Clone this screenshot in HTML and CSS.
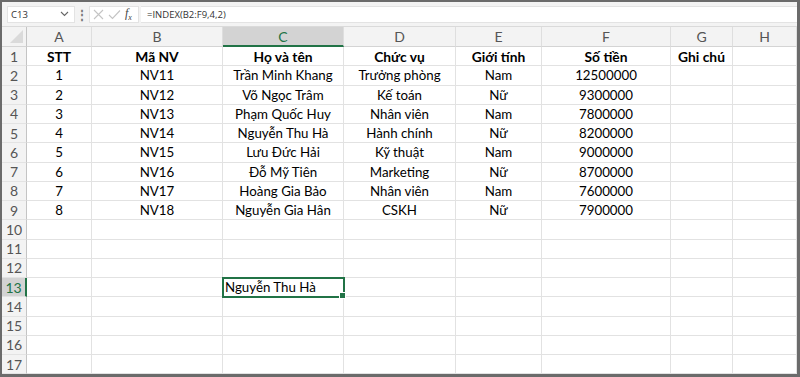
FILE: index.html
```html
<!DOCTYPE html>
<html lang="vi">
<head>
    <meta charset="UTF-8">
    <meta name="viewport" content="width=device-width, initial-scale=1.0">
    <title>Bảng nhân viên</title>
    <link rel="stylesheet" href="styles.css">
</head>
<body>
    <div class="window">
        <!-- Thanh công thức -->
        <div class="formula-bar">
            <div class="name-box">
                <span>C13</span>
                <svg class="chevron" width="9" height="6" viewBox="0 0 9 6"><path d="M1 1 L4.5 4.5 L8 1" fill="none" stroke="#666" stroke-width="1.1"/></svg>
            </div>
            <div class="dots">⋮</div>
            <div class="fx-box">
                <svg width="11" height="11" viewBox="0 0 11 11"><path d="M1 1 L10 10 M10 1 L1 10" stroke="#c4c4c4" stroke-width="1.1"/></svg>
                <svg width="13" height="11" viewBox="0 0 13 11"><path d="M1 6 L4.5 9.5 L12 1.5" fill="none" stroke="#c4c4c4" stroke-width="1.1"/></svg>
                <span class="fx">f<sub>x</sub></span>
            </div>
            <div class="formula-input">=INDEX(B2:F9,4,2)</div>
        </div>

        <!-- Bảng tính -->
        <div class="sheet">
            <div class="corner"><span class="corner-tri"></span></div>
            <div class="col-head">A</div>
            <div class="col-head">B</div>
            <div class="col-head active">C</div>
            <div class="col-head">D</div>
            <div class="col-head">E</div>
            <div class="col-head">F</div>
            <div class="col-head">G</div>
            <div class="col-head">H</div>

            <div class="row-head">1</div>
            <div class="cell bold">STT</div>
            <div class="cell bold">Mã NV</div>
            <div class="cell bold">Họ và tên</div>
            <div class="cell bold">Chức vụ</div>
            <div class="cell bold">Giới tính</div>
            <div class="cell bold">Số tiền</div>
            <div class="cell bold">Ghi chú</div>
            <div class="cell"></div>

            <div class="row-head">2</div>
            <div class="cell">1</div><div class="cell">NV11</div><div class="cell">Trần Minh Khang</div><div class="cell">Trưởng phòng</div><div class="cell">Nam</div><div class="cell">12500000</div><div class="cell"></div><div class="cell"></div>

            <div class="row-head">3</div>
            <div class="cell">2</div><div class="cell">NV12</div><div class="cell">Võ Ngọc Trâm</div><div class="cell">Kế toán</div><div class="cell">Nữ</div><div class="cell">9300000</div><div class="cell"></div><div class="cell"></div>

            <div class="row-head">4</div>
            <div class="cell">3</div><div class="cell">NV13</div><div class="cell">Phạm Quốc Huy</div><div class="cell">Nhân viên</div><div class="cell">Nam</div><div class="cell">7800000</div><div class="cell"></div><div class="cell"></div>

            <div class="row-head">5</div>
            <div class="cell">4</div><div class="cell">NV14</div><div class="cell">Nguyễn Thu Hà</div><div class="cell">Hành chính</div><div class="cell">Nữ</div><div class="cell">8200000</div><div class="cell"></div><div class="cell"></div>

            <div class="row-head">6</div>
            <div class="cell">5</div><div class="cell">NV15</div><div class="cell">Lưu Đức Hải</div><div class="cell">Kỹ thuật</div><div class="cell">Nam</div><div class="cell">9000000</div><div class="cell"></div><div class="cell"></div>

            <div class="row-head">7</div>
            <div class="cell">6</div><div class="cell">NV16</div><div class="cell">Đỗ Mỹ Tiên</div><div class="cell">Marketing</div><div class="cell">Nữ</div><div class="cell">8700000</div><div class="cell"></div><div class="cell"></div>

            <div class="row-head">8</div>
            <div class="cell">7</div><div class="cell">NV17</div><div class="cell">Hoàng Gia Bảo</div><div class="cell">Nhân viên</div><div class="cell">Nam</div><div class="cell">7600000</div><div class="cell"></div><div class="cell"></div>

            <div class="row-head">9</div>
            <div class="cell">8</div><div class="cell">NV18</div><div class="cell">Nguyễn Gia Hân</div><div class="cell">CSKH</div><div class="cell">Nữ</div><div class="cell">7900000</div><div class="cell"></div><div class="cell"></div>

            <div class="row-head">10</div>
            <div class="cell"></div><div class="cell"></div><div class="cell"></div><div class="cell"></div><div class="cell"></div><div class="cell"></div><div class="cell"></div><div class="cell"></div>

            <div class="row-head">11</div>
            <div class="cell"></div><div class="cell"></div><div class="cell"></div><div class="cell"></div><div class="cell"></div><div class="cell"></div><div class="cell"></div><div class="cell"></div>

            <div class="row-head">12</div>
            <div class="cell"></div><div class="cell"></div><div class="cell"></div><div class="cell"></div><div class="cell"></div><div class="cell"></div><div class="cell"></div><div class="cell"></div>

            <div class="row-head active">13</div>
            <div class="cell"></div><div class="cell"></div><div class="cell left selected">Nguyễn Thu Hà</div><div class="cell"></div><div class="cell"></div><div class="cell"></div><div class="cell"></div><div class="cell"></div>

            <div class="row-head">14</div>
            <div class="cell"></div><div class="cell"></div><div class="cell"></div><div class="cell"></div><div class="cell"></div><div class="cell"></div><div class="cell"></div><div class="cell"></div>

            <div class="row-head">15</div>
            <div class="cell"></div><div class="cell"></div><div class="cell"></div><div class="cell"></div><div class="cell"></div><div class="cell"></div><div class="cell"></div><div class="cell"></div>

            <div class="row-head">16</div>
            <div class="cell"></div><div class="cell"></div><div class="cell"></div><div class="cell"></div><div class="cell"></div><div class="cell"></div><div class="cell"></div><div class="cell"></div>

            <div class="row-head">17</div>
            <div class="cell"></div><div class="cell"></div><div class="cell"></div><div class="cell"></div><div class="cell"></div><div class="cell"></div><div class="cell"></div><div class="cell"></div>
        </div>
    </div>
</body>
</html>
```

FILE: styles.css
```css
* {
    margin: 0;
    padding: 0;
    box-sizing: border-box;
}

body {
    width: 800px;
    height: 377px;
    overflow: hidden;
    background: #ffffff;
    font-family: Lato, 'Open Sans', sans-serif;
}

.window {
    width: 800px;
    height: 377px;
    border-style: solid;
    border-color: #6b6b6b;
    border-width: 2px 3px 3px 2px;
    overflow: hidden;
    background: #ffffff;
}

/* Thanh công thức */
.formula-bar {
    height: 25px;
    background: #f3f3f3;
    border-bottom: 1px solid #dadada;
    display: flex;
    align-items: center;
    padding-left: 5px;
    font-family: 'Open Sans', 'Noto Sans', sans-serif;
    font-size: 9.5px;
    color: #333;
}

.name-box {
    width: 68px;
    height: 17px;
    background: #ffffff;
    border: 1px solid #e3e3e3;
    display: flex;
    align-items: center;
    justify-content: space-between;
    padding: 0 5px 0 3px;
}

.dots {
    width: 14px;
    text-align: center;
    color: #777;
    font-size: 12px;
    font-weight: bold;
}

.fx-box {
    width: 50px;
    height: 17px;
    background: #ffffff;
    border: 1px solid #e3e3e3;
    display: flex;
    align-items: center;
    gap: 4px;
    padding-left: 3px;
}

.fx {
    font-family: 'Liberation Serif', serif;
    font-style: italic;
    font-size: 12px;
    color: #444;
}

.fx sub {
    font-size: 8px;
}

.formula-input {
    flex: 1;
    height: 17px;
    margin-left: 2px;
    background: #ffffff;
    border-top: 1px solid #e3e3e3;
    border-bottom: 1px solid #e3e3e3;
    padding-left: 6px;
    line-height: 15px;
}

/* Bảng tính */
.sheet {
    display: grid;
    grid-template-columns: 25px 65px 131px 121px 112px 86px 129px 62px 64px;
    grid-template-rows: 20px repeat(17, 19.25px);
    font-size: 13.3px;
    color: #000;
}

.corner,
.col-head {
    background: #f3f3f3;
    border-bottom: 1px solid #d4d4d4;
    border-right: 1px solid #dedede;
}

.corner {
    position: relative;
    border-right-color: #c4c4c4;
}

.corner-tri {
    position: absolute;
    right: 3px;
    bottom: 3px;
    width: 0;
    height: 0;
    border-left: 13px solid transparent;
    border-bottom: 13px solid #dadada;
}

.col-head {
    display: flex;
    align-items: center;
    justify-content: center;
    color: #555;
    font-size: 14px;
}

.col-head.active {
    background: #d3d3d3;
    color: #217346;
    border-bottom: 2px solid #217346;
}

.row-head {
    background: #f3f3f3;
    border-right: 1px solid #c4c4c4;
    border-bottom: 1px solid #e3e3e3;
    display: flex;
    align-items: center;
    justify-content: center;
    color: #555;
    font-size: 14px;
}

.row-head.active {
    background: #d3d3d3;
    color: #217346;
    border-right: 2px solid #217346;
}

.cell {
    border-right: 1px solid #e2e2e2;
    border-bottom: 1px solid #e2e2e2;
    display: flex;
    align-items: center;
    justify-content: center;
    white-space: nowrap;
}

.cell.bold {
    font-weight: bold;
    font-size: 13.8px;
}

.cell.left {
    justify-content: flex-start;
    padding-left: 2px;
}

.cell.selected {
    position: relative;
    outline: 2px solid #217346;
    outline-offset: -1px;
    z-index: 1;
}

.cell.selected::after {
    content: '';
    position: absolute;
    right: -3px;
    bottom: -3px;
    width: 5px;
    height: 5px;
    background: #217346;
    border: 1px solid #ffffff;
}
```
